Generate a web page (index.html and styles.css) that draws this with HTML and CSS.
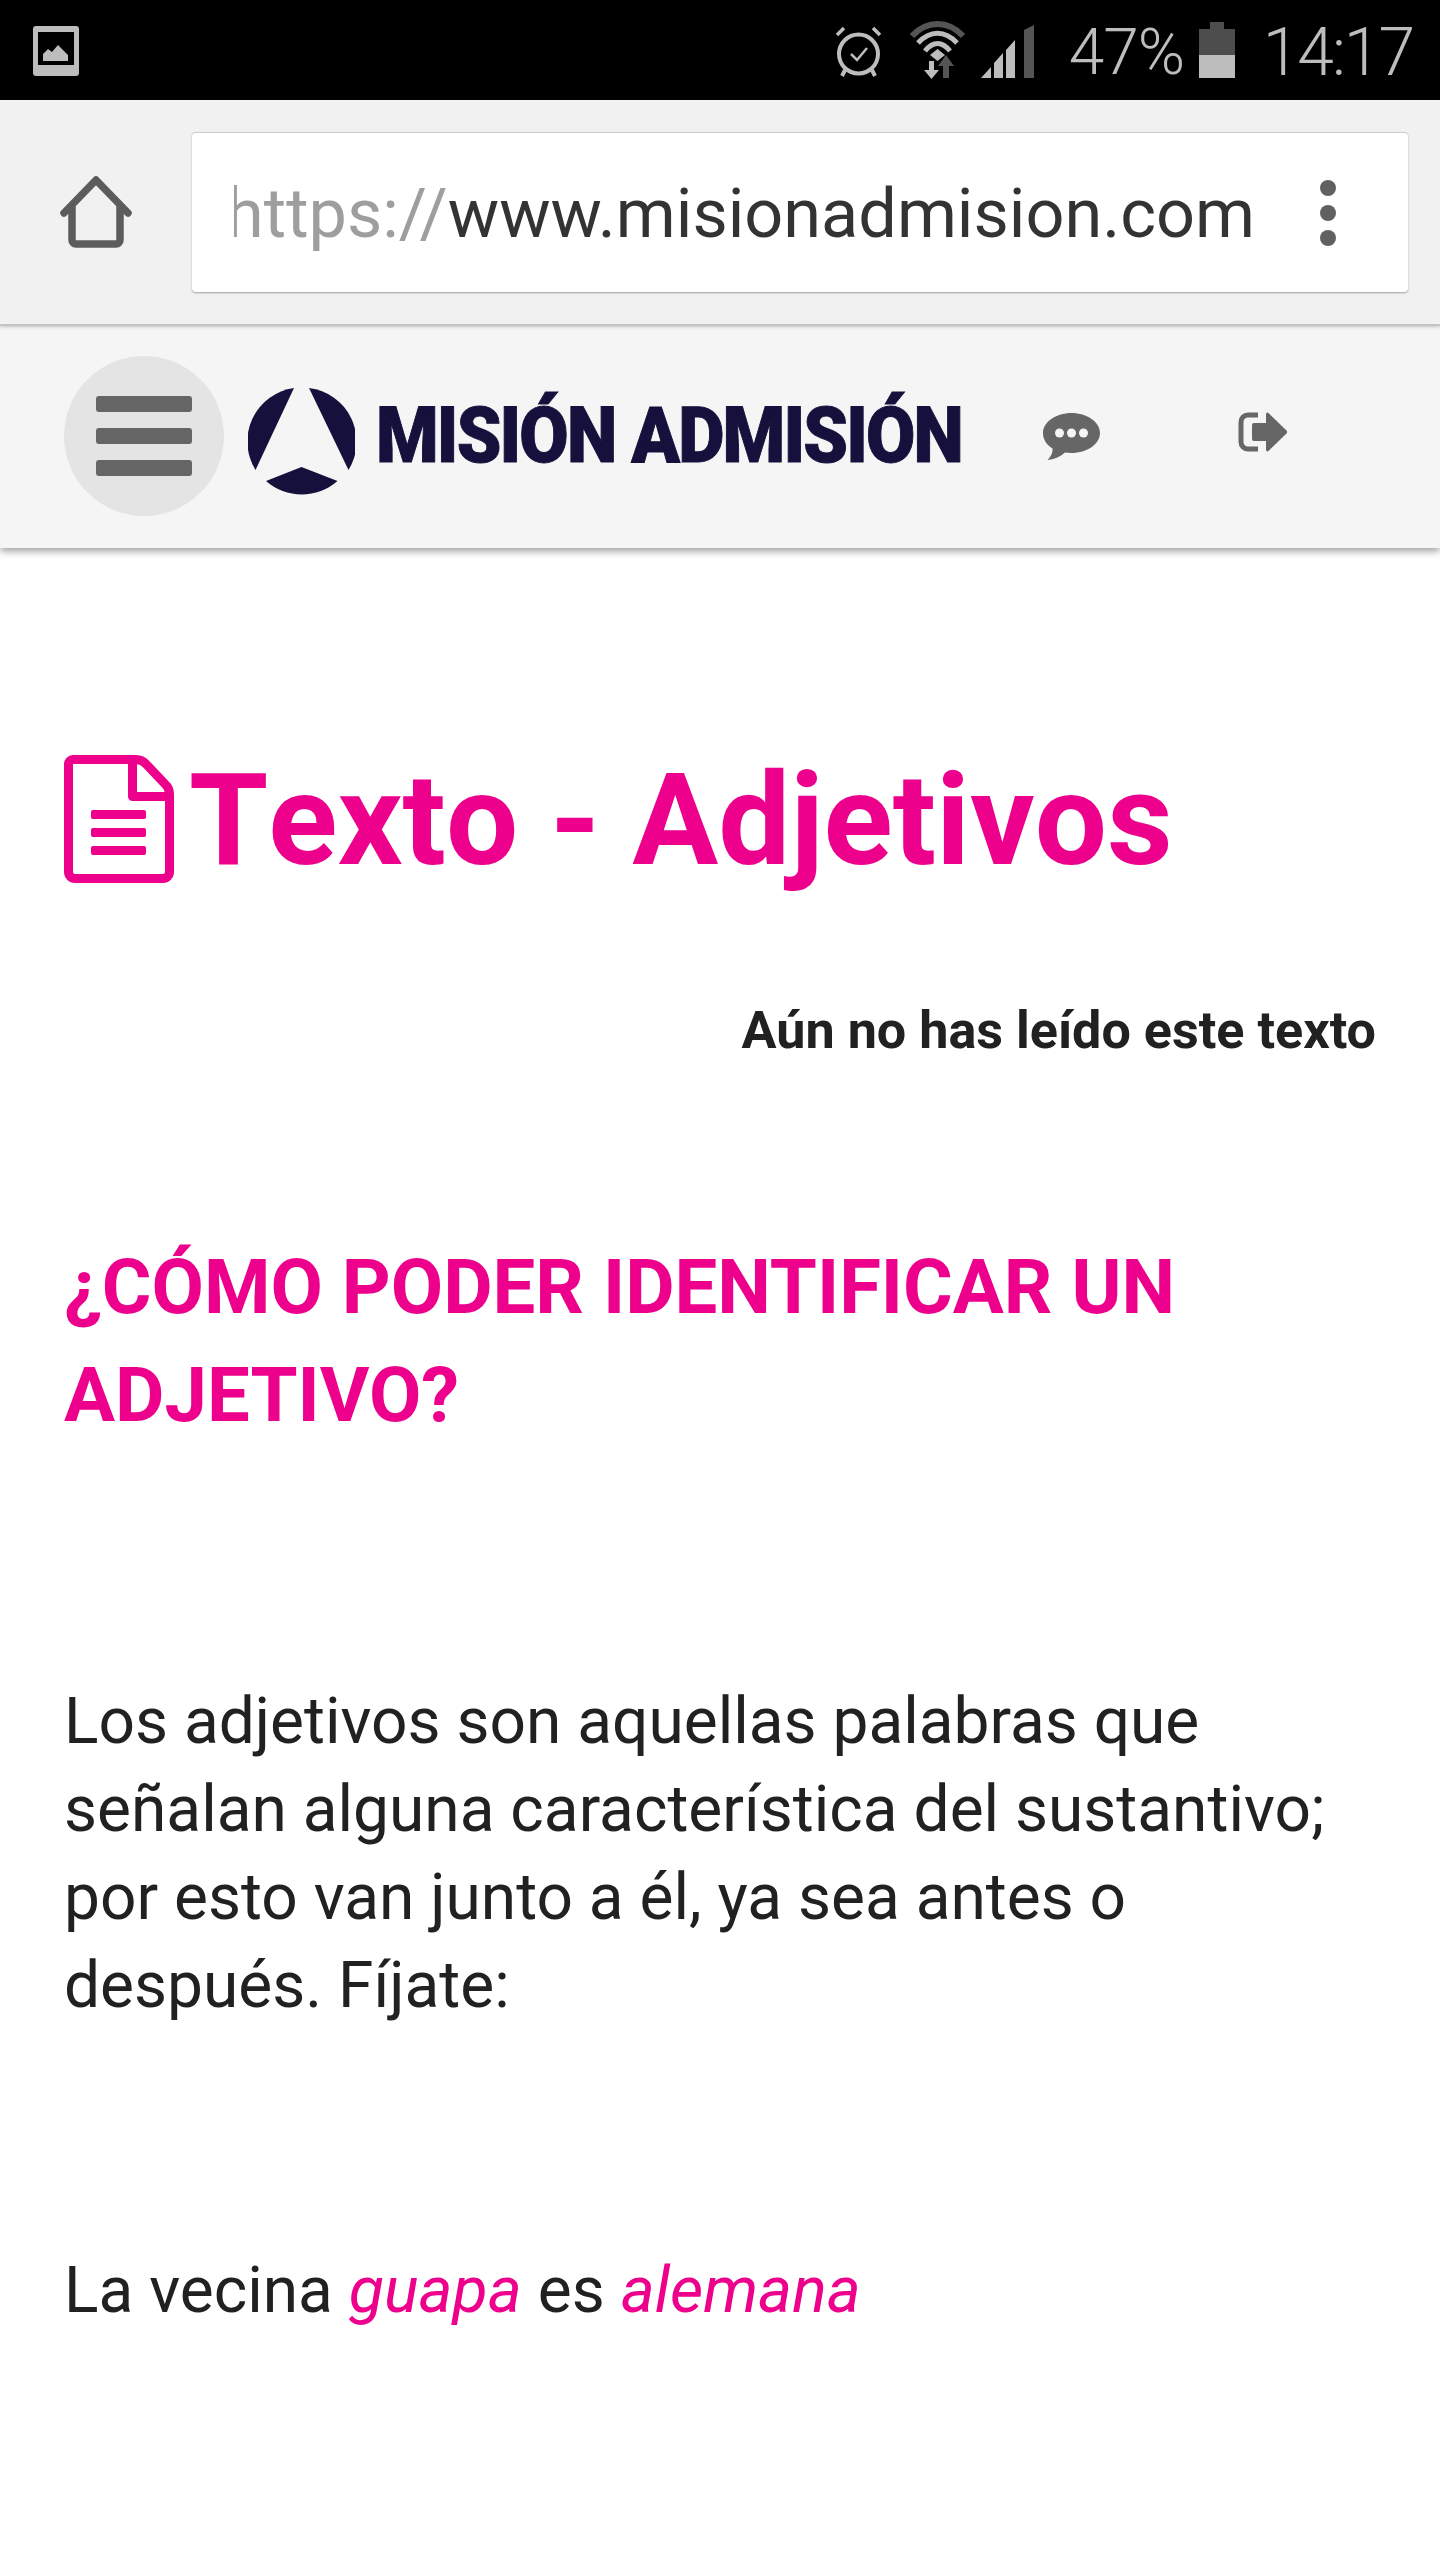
FILE: index.html
```html
<!DOCTYPE html>
<html lang="es">
<head>
<meta charset="utf-8">
<title>Texto - Adjetivos</title>
<link rel="stylesheet" href="styles.css">
</head>
<body>
<div class="status">
  <svg class="st-image" viewBox="0 0 46 50"><rect width="46" height="50" rx="3" fill="#bdbdbd"/><rect x="5" y="6" width="36" height="33" fill="#000"/><path d="M10 35V28L15 23 19 26 25 19 35 29V35Z" fill="#bdbdbd"/></svg>
  <span class="st-spacer"></span>
  <svg class="st-alarm" viewBox="0 0 47 51"><g fill="none" stroke="#bdbdbd"><circle cx="23.5" cy="28" r="19.5" stroke-width="4"/><path d="M2 9 9 2M45 9 38 2" stroke-width="3.5"/><path d="M16 28l6 6 10-12" stroke-width="2.5"/><path d="M10 44 7 50M37 44l3 6" stroke-width="4"/></g></svg>
  <svg class="st-wifi" viewBox="0 0 55 58"><g fill="none"><path d="M2 15C17 -1 38 -1 53 15" stroke="#555" stroke-width="6"/><path d="M8 22C20 9 35 9 47 22" stroke="#bdbdbd" stroke-width="5"/><path d="M15 30C23 20 32 20 40 30" stroke="#bdbdbd" stroke-width="5"/></g><path d="M20 34 27.500 28 35 34 27.500 40Z" fill="#bdbdbd"/><path d="M19 40h5v9h5l-7.500 9-7.500-9h5Z" fill="#bdbdbd"/><path d="M36 34l8 11h-5v12h-6V45h-5Z" fill="#555"/></svg>
  <svg class="st-signal" viewBox="0 0 53 53"><path d="M0 53 10 42V53Z" fill="#bdbdbd"/><path d="M13 53V38L22 28V53Z" fill="#bdbdbd"/><path d="M25 53V25L34 15V53Z" fill="#bdbdbd"/><path d="M43 53V5L53 0V53Z" fill="#555"/></svg>
  <span class="st-pct">47%</span>
  <svg class="st-batt" viewBox="0 0 36 56"><path d="M11 0H25V7H36V33H0V7H11Z" fill="#4d4d4d"/><rect y="33" width="36" height="23" fill="#bdbdbd"/></svg>
  <span class="st-time">14:17</span>
</div>

<div class="toolbar">
  <svg class="home" viewBox="0 0 72 72"><path d="M4 37 36 4 68 37M12 30V64a4 4 0 0 0 4 4H56a4 4 0 0 0 4-4V30" fill="none" stroke="#5c5c5c" stroke-width="7.500" stroke-linecap="round" stroke-linejoin="round"/></svg>
  <div class="urlbox">
    <div class="url"><span class="url-inner"><span class="scheme">https://</span>www.misionadmision.com</span></div>
    <div class="dots"><i></i><i></i><i></i></div>
  </div>
</div>

<header class="appbar">
  <div class="burger"><i></i><i></i><i></i></div>
  <svg class="logo-mark" viewBox="0 0 107 108"><g fill="#15113c"><path d="M46 0 7.500 82A54 54 0 0 1 46 0Z"/><path d="M61 0 100.500 82A54 54 0 0 0 61 0Z"/><path d="M53.500 79 89.500 93A54 54 0 0 1 18 93Z"/></g></svg>
  <span class="logo-box"><span class="logo-text">MISIÓN ADMISIÓN</span></span>
  <svg class="chat" viewBox="0 0 57 47"><path d="M28.500 0C44 0 57 9 57 20S44 40 28.500 40C26 40 24 39.800 22 39.500 17 44 11 46.500 4.500 47 8 43.500 10 39.500 9.500 35.500 3.700 32 0 26.500 0 20 0 9 13 0 28.500 0Z" fill="#666"/><g fill="#f5f5f5"><circle cx="16.500" cy="20" r="4.500"/><circle cx="28.500" cy="20" r="4.500"/><circle cx="40.500" cy="20" r="4.500"/></g></svg>
  <svg class="exit" viewBox="0 0 49 40"><path d="M20 3H10a7 7 0 0 0-7 7V30a7 7 0 0 0 7 7H20" fill="none" stroke="#666" stroke-width="5"/><path d="M14 13a2 2 0 0 1 2-2H28V2a1.500 1.500 0 0 1 2.500-1L48.500 18.500a2 2 0 0 1 0 3L30.500 39a1.500 1.500 0 0 1-2.500-1V29H16a2 2 0 0 1-2-2Z" fill="#666"/></svg>
</header>

<main class="content">
  <h1 class="title">
    <svg class="doc" viewBox="0 0 110 128"><g fill="none" stroke="#ec008c" stroke-width="9" stroke-linejoin="round"><path d="M9 4.500H72Q78 4.500 82 9L101 29Q105.500 33 105.500 39V117A6.500 6.500 0 0 1 99 123.500H11A6.500 6.500 0 0 1 4.500 117V9A4.500 4.500 0 0 1 9 4.500Z"/><path d="M68.500 4.500V41.500H105.500"/></g><g fill="#ec008c"><rect x="27" y="55" width="55" height="9" rx="2"/><rect x="27" y="73" width="55" height="9" rx="2"/><rect x="27" y="91" width="55" height="9" rx="2"/></g></svg>
    <span class="title-text">Texto - Adjetivos</span>
  </h1>
  <p class="read-state">Aún no has leído este texto</p>
  <h2 class="subtitle">¿CÓMO PODER IDENTIFICAR UN ADJETIVO?</h2>
  <p class="body-text">Los adjetivos son aquellas palabras que señalan alguna característica del sustantivo; por esto van junto a él, ya sea antes o después. Fíjate:</p>
  <p class="body-text example">La vecina <em>guapa</em> es <em>alemana</em></p>
</main>
</body>
</html>
```
FILE: styles.css
```css
* { box-sizing: border-box; }
html, body { margin: 0; padding: 0; }
body { width: 1440px; height: 2560px; overflow: hidden; background: #fff; font-family: Roboto, "Noto Sans", sans-serif; color: #212121; }

.status { height: 100px; background: #000; display: flex; align-items: flex-start; color: #bdbdbd; }
.status svg { display: block; flex: none; }
.st-image { width: 46px; height: 50px; margin: 26px 0 0 33px; }
.st-spacer { flex: 1; }
.st-alarm { width: 47px; height: 51px; margin-top: 26px; }
.st-wifi { width: 55px; height: 58px; margin: 21px 0 0 28px; }
.st-signal { width: 53px; height: 53px; margin: 25px 0 0 16px; }
.st-pct { font-weight: 300; font-size: 64px; line-height: 100px; margin: 3px 0 0 35px; width: 130px; letter-spacing: -1px; }
.st-batt { width: 36px; height: 56px; margin: 22px 0 0 0; }
.st-time { font-weight: 300; font-size: 66px; line-height: 100px; margin: 3px 27px 0 28px; letter-spacing: -2px; }

.toolbar { height: 226px; background: #f1f1f1; border-bottom: 2px solid #c4c4c4; box-shadow: 0 1px 3px rgba(0,0,0,.2); display: flex; align-items: center; padding: 0 32px 0 60px; position: relative; z-index: 1; }
.home { width: 72px; height: 72px; flex: none; display: block; }
.urlbox { width: 1216px; height: 160px; margin-left: 60px; background: #fff; border-radius: 4px; border-top: 1px solid #ccc; box-shadow: 0 1px 2px rgba(0,0,0,.35); display: flex; align-items: center; padding-left: 42px; }
.url { width: 1021px; overflow: hidden; display: flex; justify-content: flex-end; white-space: nowrap; font-size: 68.4px; line-height: 90px; padding-top: 3px; color: #333; }
.url-inner { flex: none; }
.scheme { color: #9e9e9e; }
.dots { margin-left: 65px; display: flex; flex-direction: column; gap: 9px; }
.dots i { display: block; width: 16px; height: 16px; border-radius: 50%; background: #616161; }

.appbar { height: 222px; background: #f5f5f5; box-shadow: 0 3px 8px rgba(0,0,0,.4); display: flex; align-items: center; padding: 0 0 2px 64px; position: relative; }
.burger { width: 160px; height: 160px; border-radius: 50%; background: #e4e4e4; display: flex; flex-direction: column; align-items: center; justify-content: center; gap: 16px; flex: none; }
.burger i { display: block; width: 96px; height: 16px; border-radius: 3px; background: #666; }
.logo-mark { width: 107px; height: 108px; margin: 12px 0 0 24px; flex: none; display: block; }
.logo-box { width: 581px; margin-left: 21px; flex: none; }
.logo-text { display: inline-block; font-weight: 900; font-size: 78px; line-height: 100px; color: #15113c; white-space: nowrap; transform: scaleX(.917); transform-origin: left center; letter-spacing: -2px; -webkit-text-stroke: 1px #15113c; }
.chat { width: 57px; height: 47px; margin-left: 86px; flex: none; display: block; }
.exit { width: 49px; height: 40px; margin: 0 0 8px 138px; flex: none; display: block; }

.content { padding: 0 64px; }
.title { margin: 195px 0 0; display: flex; align-items: center; gap: 15px; color: #ec008c; font-size: 128px; line-height: 150px; font-weight: 700; white-space: nowrap; }
.title-text { font-kerning: none; padding-top: 2px; }
.doc { width: 110px; height: 128px; flex: none; display: block; }
.read-state { margin: 101px 0 0; text-align: right; font-size: 52.1px; line-height: 70px; font-weight: 700; }
.subtitle { margin: 167px 0 0; color: #ec008c; font-size: 76px; line-height: 108px; font-weight: 700; }
.body-text { margin: 229px 0 0; font-size: 64px; line-height: 88px; }
.example { margin-top: 216px; }
.example em { color: #ec008c; font-style: italic; font-size: 64.6px; }
```
